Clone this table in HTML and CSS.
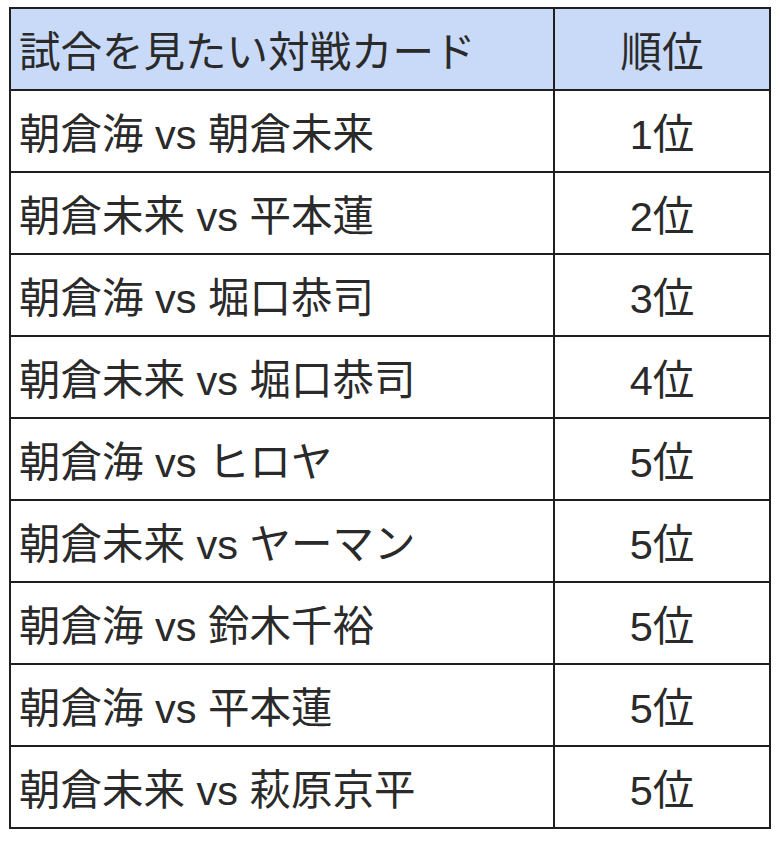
FILE: index.html
```html
<!DOCTYPE html>
<html lang="ja">
<head>
<meta charset="utf-8">
<link rel="stylesheet" href="styles.css">
</head>
<body>
<table class="rank-table">
  <thead>
    <tr><th class="card">試合を見たい対戦カード</th><th class="rank">順位</th></tr>
  </thead>
  <tbody>
    <tr><td class="card">朝倉海 vs 朝倉未来</td><td class="rank">1位</td></tr>
    <tr><td class="card">朝倉未来 vs 平本蓮</td><td class="rank">2位</td></tr>
    <tr><td class="card">朝倉海 vs 堀口恭司</td><td class="rank">3位</td></tr>
    <tr><td class="card">朝倉未来 vs 堀口恭司</td><td class="rank">4位</td></tr>
    <tr><td class="card">朝倉海 vs ヒロヤ</td><td class="rank">5位</td></tr>
    <tr><td class="card">朝倉未来 vs ヤーマン</td><td class="rank">5位</td></tr>
    <tr><td class="card">朝倉海 vs 鈴木千裕</td><td class="rank">5位</td></tr>
    <tr><td class="card">朝倉海 vs 平本蓮</td><td class="rank">5位</td></tr>
    <tr><td class="card">朝倉未来 vs 萩原京平</td><td class="rank">5位</td></tr>
  </tbody>
</table>
</body>
</html>
```
FILE: styles.css
```css
html, body {
  margin: 0;
  padding: 0;
  background: #ffffff;
}
body {
  padding: 7px 0 0 9px;
}
.rank-table {
  border-collapse: collapse;
  font-family: "Liberation Sans", "Noto Sans CJK JP", sans-serif;
  font-size: 41.5px;
  color: #2a2a2a;
}
.rank-table th,
.rank-table td {
  border: 2px solid #1f1f1f;
  height: 82px;
  padding: 0 8px;
  font-weight: normal;
  box-sizing: border-box;
}
.rank-table thead th {
  background: #c9daf8;
}
.rank-table .card {
  width: 544px;
  text-align: left;
}
.rank-table .rank {
  width: 216px;
  text-align: center;
}
```
